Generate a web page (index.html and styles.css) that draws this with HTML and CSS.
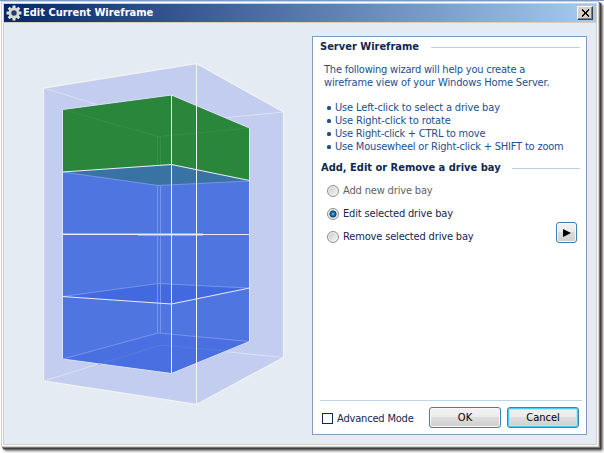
FILE: index.html
```html
<!DOCTYPE html>
<html lang="en">
<head>
<meta charset="utf-8">
<title>Edit Current Wireframe</title>
<link rel="stylesheet" href="styles.css">
</head>
<body>
<div class="window">
  <header class="titlebar">
    <svg class="gear" viewBox="0 0 16 16" width="16" height="16">
      <g stroke="#e4e2de" stroke-width="3"><path d="M8 .5v15M.5 8h15M2.7 2.7l10.6 10.6M13.3 2.7L2.7 13.3"/></g>
      <circle cx="8" cy="8" r="4.1" fill="#253a70" stroke="#d8d7d4" stroke-width="2.8"/>
    </svg>
    <h1>Edit Current Wireframe</h1>
    <button class="close" aria-label="Close"><svg viewBox="0 0 9 8" width="9" height="8" shape-rendering="crispEdges"><path d="M1 0.5l7 7M8 0.5l-7 7" stroke="#000" stroke-width="1.7"/></svg></button>
  </header>
  <main class="content">
    <svg class="model" width="308" height="424" viewBox="4 23 308 424">
      <path d="M43.5 88L196.5 63.5L283.5 112V357.5L196.5 404.5L43.5 381Z" fill="#c2cdef"/>
      <g fill="none" stroke="#dce2f4"><path d="M43.5 88L160 124L283.5 112M43.5 381L160 345L283.5 357.5M160 124V345"/></g>
      <path d="M62.5 109.5L171.5 95L249.5 128V181L171.5 165L62.5 172Z" fill="#29863a"/>
      <path d="M62.5 172L171.5 165L249.5 181V341.5L171.5 373.5L62.5 359Z" fill="#4f75e1"/>
      <path d="M62.5 172L171.5 165L249.5 181L158 185.5Z" fill="#3973a3"/>
      <path d="M62.5 296.5L158 283.5L249.5 288L171.5 304Z" fill="#4269e0"/>
      <path d="M62.5 359L158 333L249.5 341.5L171.5 373.5Z" fill="#496fe1"/>
      <g fill="none" stroke="#378f49"><path d="M62.5 109.5L158 136.5L249.5 128M157.5 136V166M160.5 136V166"/></g>
      <g fill="none" stroke="#7795e8"><path d="M62.5 172L158 185.5L249.5 181M157.5 186V333M160.5 186V333M62.5 296.5L158 283.5L249.5 288M62.5 359L158 333L249.5 341.5"/></g>
      <path d="M98 364.5L160 345L226 351" fill="none" stroke="#587be2"/>
      <path d="M63 233.5H203M138 235.5H203" stroke="#93a9eb"/>
      <g fill="none" stroke="#dce3f8"><path d="M62.5 109.5L171.5 95L249.5 128V341.5L171.5 373.5L62.5 359Z"/></g>
      <g fill="none" stroke="#e9edf9"><path d="M62.5 172L171.5 164.5L249.5 180.5M62.5 234.5H249.5M62.5 296.5L171.5 304L249.5 288M171.5 95V373.5"/></g>
      <g fill="none" stroke="#f0f1f3" stroke-width="1.3"><path d="M43.5 88L196.5 63.5L283.5 112V357.5L196.5 404.5L43.5 381Z"/></g>
      <path d="M196.5 64V404" stroke="#f5f5f6"/>
    </svg>
    <section class="panel">
      <div class="heading"><h2 class="h-one">Server Wireframe</h2><span class="rule"></span></div>
      <p class="intro"><span class="l1">The following wizard will help you create a</span><br><span class="l2">wireframe view of your Windows Home Server.</span></p>
      <ul class="tips">
        <li><span class="t1">Use Left-click to select a drive bay</span></li>
        <li><span class="t2">Use Right-click to rotate</span></li>
        <li><span class="t3">Use Right-click + CTRL to move</span></li>
        <li><span class="t4">Use Mousewheel or Right-click + SHIFT to zoom</span></li>
      </ul>
      <div class="heading second"><h2 class="h-two">Add, Edit or Remove a drive bay</h2><span class="rule"></span></div>
      <div class="choices">
        <div class="options">
          <label class="disabled"><i class="radio"></i><span>Add new drive bay</span></label>
          <label><i class="radio on"></i><span>Edit selected drive bay</span></label>
          <label><i class="radio"></i><span>Remove selected drive bay</span></label>
        </div>
        <button class="btn next" aria-label="Next"><svg viewBox="0 0 8 8" width="8" height="8"><path d="M0 0L8 4L0 8Z"/></svg></button>
      </div>
      <footer class="footer">
        <label class="advanced"><i class="check"></i><span>Advanced Mode</span></label>
        <button class="btn">OK</button>
        <button class="btn default">Cancel</button>
      </footer>
    </section>
  </main>
</div>
</body>
</html>
```
FILE: styles.css
```css
* { box-sizing: border-box; }
body {
  margin: 0;
  width: 604px;
  height: 453px;
  overflow: hidden;
  padding: 1px 0 0 1px;
  background: linear-gradient(#7c9dbd 1px, #fff 1px);
  font: 11px/13px "DejaVu Sans Condensed", "DejaVu Sans", sans-serif;
  color: #10284f;
}
h1, h2, p, ul { margin: 0; padding: 0; }
button { font: inherit; padding: 0; }
.window {
  width: 598px;
  height: 446px;
  border: 1px solid #d4d0c8;
  box-shadow: inset 0 0 0 1px #fff, inset 0 0 0 2px #d4d0c8, 1px 1px 0 #77756f, 2px 2px 1px #404040, 3px 3px 2px #555, 4px 4px 3px #999;
  padding: 2px;
  background: #e4ebf3;
}
.titlebar {
  height: 18px;
  display: flex;
  align-items: center;
  padding: 0 3px 0 2px;
  background: linear-gradient(90deg, #0a246a, #a6caf0);
}
.titlebar h1 {
  flex: 1;
  margin-left: 1px;
  color: #fff;
  font-size: 11px;
  line-height: 16px;
  white-space: nowrap;
}
.close {
  width: 16px;
  height: 14px;
  display: grid;
  place-items: center;
  background: #d4d0c8;
  border: 1px solid;
  border-color: #fff #404040 #404040 #fff;
  box-shadow: inset -1px -1px #808080;
}
.content {
  height: 424px;
  display: flex;
  border-top: 1px solid #d4d0c8;
}
.model { flex: none; display: block; }
.panel {
  width: 275px;
  height: 399px;
  margin-top: 13px;
  padding: 3px 5px 5px 7px;
  display: flex;
  flex-direction: column;
  background: #fff;
  border: 1px solid #7f9db9;
}
.heading { display: flex; align-items: center; gap: 11px; height: 14px; padding-right: 1px; }
.heading h2 { font-size: 11px; line-height: 14px; white-space: nowrap; }
.heading .h-one { margin-right: 1px; }
.heading .h-two { margin-left: 1px; }
.rule { flex: 1; height: 1px; background: #b9d3e8; }
.intro { margin: 9px 0 0 4px; color: #215090; white-space: nowrap; }
.l1 { letter-spacing: -0.22px; }
.l2 { letter-spacing: -0.14px; }
.tips { list-style: none; margin: 12px 0 0 7px; color: #215090; white-space: nowrap; }
.tips li { display: flex; align-items: center; gap: 4px; height: 13px; }
.tips li::before { content: ""; width: 4px; height: 4px; border-radius: 1.5px; background: #215090; }
.t1, .t2 { letter-spacing: -0.15px; }
.t3 { letter-spacing: -0.23px; }
.t4 { letter-spacing: -0.19px; }
.second { margin-top: 8px; }
.choices { display: flex; justify-content: space-between; padding: 4px 3px 0 7px; }
.options { white-space: nowrap; letter-spacing: -0.16px; }
.options label { display: flex; align-items: center; gap: 4px; height: 23px; }
.disabled { color: #626262; }
.radio {
  width: 12px;
  height: 12px;
  border-radius: 50%;
  border: 1px solid #8e8f8f;
  background: linear-gradient(135deg, #c9cccf, #f6f6f6);
  box-shadow: inset 0 0 0 1px #f2f2f2;
}
.radio.on { background: radial-gradient(circle at 50% 50%, #6fd0f8 0, #1c83bb 20%, #12395b 45%, #e4e8eb 56%); }
.btn {
  height: 21px;
  width: 72px;
  color: #000;
  border: 1px solid #3c7fb1;
  border-radius: 3px;
  background: linear-gradient(#f2f2f2, #ebebeb 50%, #dddddd 50%, #cfcfcf);
  box-shadow: inset 0 0 0 1px #f8f8f8;
}
.next { width: 21px; margin: 43px 1px 0 0; display: grid; place-items: center; }
.default { box-shadow: inset 0 0 0 1px #48cdf3, inset 0 0 0 2px #b4e8f8; }
.footer {
  margin-top: auto;
  height: 29px;
  display: flex;
  align-items: flex-start;
  gap: 6px;
  padding: 6px 3px 0 2px;
  border-top: 1px solid #c0d4e5;
  margin-right: -1px;
}
.advanced { flex: 1; display: flex; align-items: center; gap: 4px; height: 22px; white-space: nowrap; letter-spacing: -0.18px; }
.check { width: 11px; height: 11px; border: 1px solid #10284f; }
```
